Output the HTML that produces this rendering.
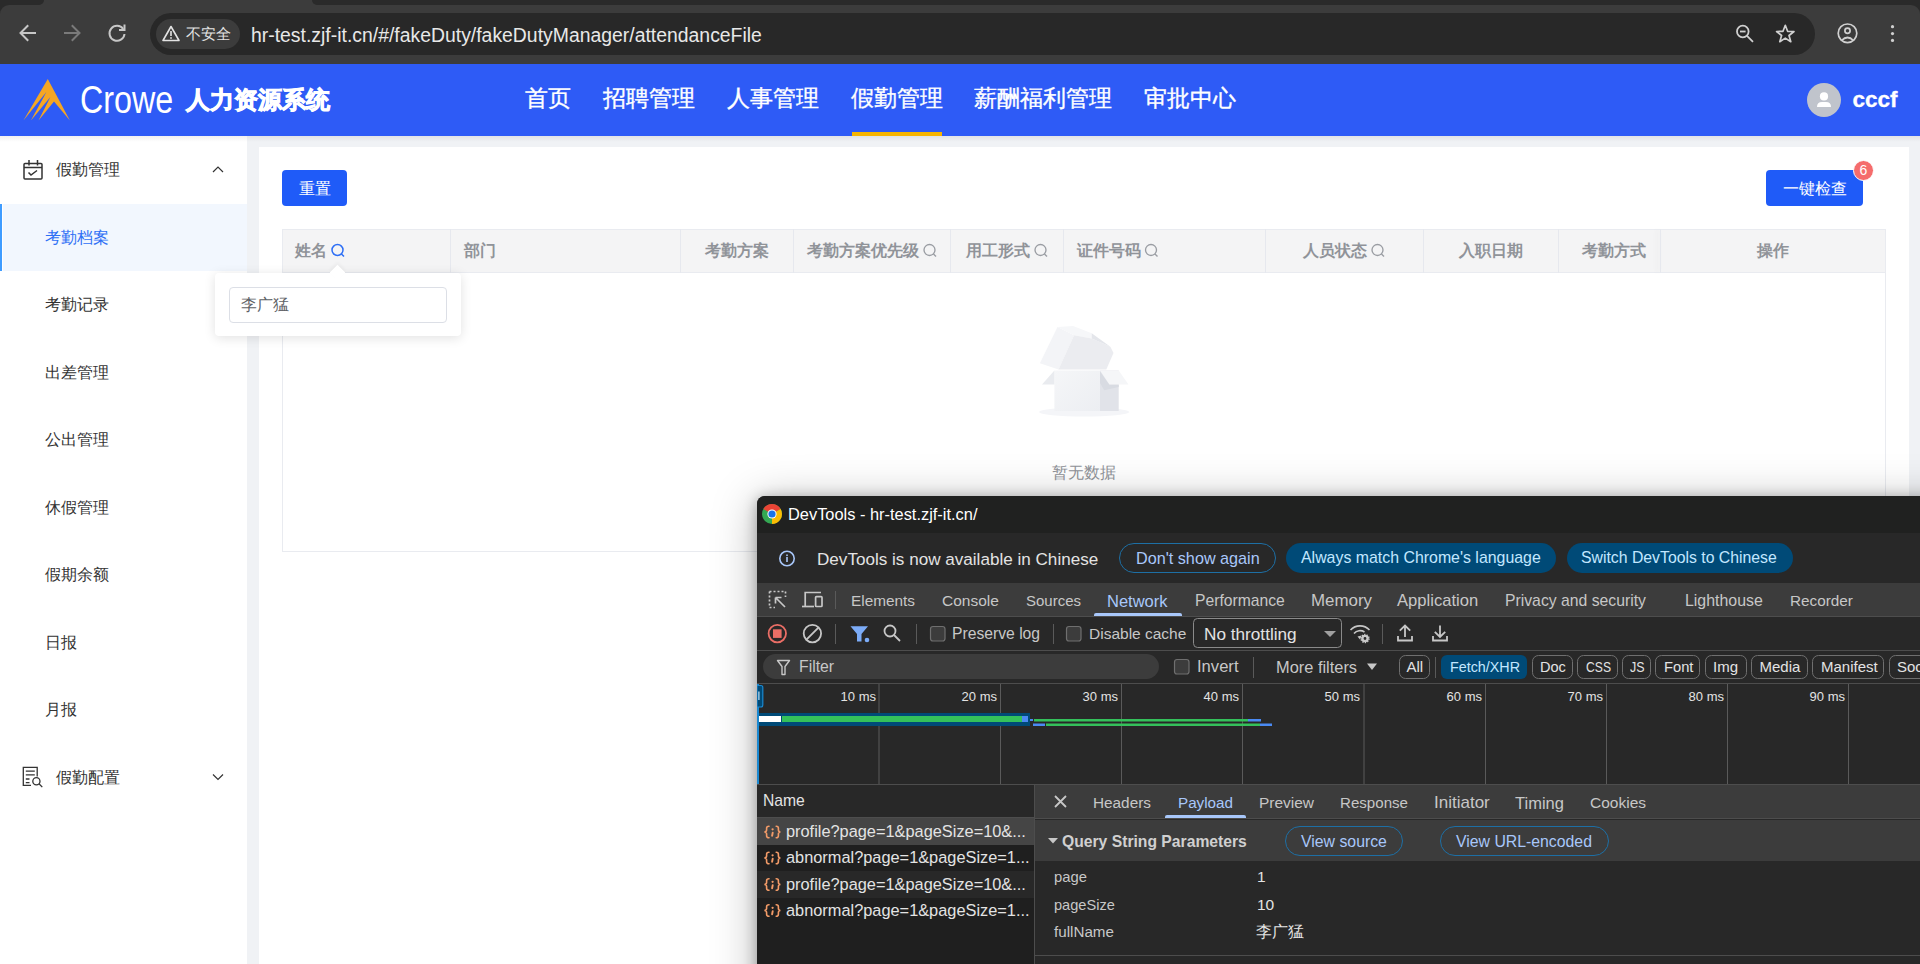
<!DOCTYPE html>
<html><head><meta charset="utf-8">
<style>
*{box-sizing:border-box;margin:0;padding:0}
html,body{width:1920px;height:964px;overflow:hidden;background:#f0f2f5;font-family:"Liberation Sans",sans-serif}
.a{position:absolute}
.nw{white-space:nowrap}
/* browser chrome */
#chrome{left:0;top:0;width:1920px;height:64px;background:#3c3c3c}
/* header */
#hdr{left:0;top:64px;width:1920px;height:72px;background:#2e5bf6}
.nav{top:83.3px;font-size:22.75px;color:#fff;line-height:30px;-webkit-text-stroke:0.35px #fff}
/* sidebar */
#side{left:0;top:136px;width:247px;height:828px;background:#fff}
.mi{left:45px;font-size:16px;color:#333;line-height:20px;margin-top:0.8px}
/* card */
#card{left:259px;top:147px;width:1650px;height:830px;background:#fff}
.btn{background:#1f5bf8;border-radius:4px;color:#fff;font-size:16px;text-align:center;line-height:37.6px;height:36px}
.th{top:240.5px;font-size:16px;font-weight:bold;color:#909399;line-height:20px}
.sep{top:229px;width:1px;height:44px;background:#e6e8ee}
/* devtools */
.dtxt{color:#e3e3e3;font-size:15px;line-height:18px}
</style></head><body>

<!-- ============ BROWSER CHROME ============ -->
<div id="chrome" class="a"></div>
<div class="a" style="left:0;top:0;width:44px;height:5px;background:#2a2a2a;border-radius:0 0 6px 0"></div>
<div class="a" style="left:312px;top:0;width:1608px;height:5px;background:#2a2a2a;border-radius:0 0 0 6px"></div>
<div class="a" style="left:0;top:5px;width:9px;height:9px;background:#2a2a2a"></div>
<div class="a" style="left:1911px;top:5px;width:9px;height:9px;background:#2a2a2a"></div>
<div class="a" style="left:0;top:5px;width:1920px;height:59px;background:#3c3c3c;border-radius:9px 9px 0 0"></div>
<div class="a" style="left:150px;top:13px;width:1665px;height:42px;background:#282828;border-radius:21px"></div>
<div class="a" style="left:156px;top:19px;width:84px;height:30px;background:#3c3c3c;border-radius:15px"></div>
<svg class="a" style="left:0;top:0" width="1920" height="64">
 <g stroke="#c7c7c7" stroke-width="2" fill="none" stroke-linecap="square">
  <path d="M21 33 H35 M27.5 26 L20.5 33 L27.5 40"/>
 </g>
 <g stroke="#7a7a7a" stroke-width="2" fill="none" stroke-linecap="square">
  <path d="M65 33 H79 M72.5 26 L79.5 33 L72.5 40"/>
 </g>
 <g stroke="#c7c7c7" stroke-width="2" fill="none">
  <path d="M123.2 29 A7.5 7.5 0 1 0 124.5 34"/>
  <path d="M124.5 25.5 V30 H120" stroke-linecap="square"/>
 </g>
 <g stroke="#e3e3e3" stroke-width="1.6" fill="none" stroke-linejoin="round">
  <path d="M171 26.5 L179 40.5 H163 Z"/>
 </g>
 <rect x="170.2" y="31" width="1.6" height="5" fill="#e3e3e3"/>
 <rect x="170.2" y="37.2" width="1.6" height="1.6" fill="#e3e3e3"/>
 <!-- zoom -->
 <g stroke="#d0d0d0" stroke-width="1.8" fill="none">
  <circle cx="1742.8" cy="31.5" r="5.8"/>
  <path d="M1747 35.8 L1753 41.8"/>
  <path d="M1740 31.5 H1745.6"/>
 </g>
 <!-- star -->
 <path d="M1785.3 25.3 L1787.6 31.3 L1794 31.5 L1789 35.5 L1790.8 41.7 L1785.3 38.1 L1779.8 41.7 L1781.6 35.5 L1776.6 31.5 L1783 31.3 Z" stroke="#d0d0d0" stroke-width="1.7" fill="none" stroke-linejoin="round"/>
 <!-- profile -->
 <g stroke="#d0d0d0" stroke-width="1.7" fill="none">
  <circle cx="1847.5" cy="33.3" r="9.3"/>
  <circle cx="1847.5" cy="30.8" r="2.6"/>
  <path d="M1841.5 40.5 Q1847.5 34.5 1853.5 40.5"/>
 </g>
 <g fill="#d0d0d0">
  <circle cx="1892.5" cy="26.7" r="1.6"/><circle cx="1892.5" cy="33.6" r="1.6"/><circle cx="1892.5" cy="40.4" r="1.6"/>
 </g>
</svg>
<div class="a nw" style="left:186px;top:24px;font-size:15px;line-height:20px;color:#e3e3e3">不安全</div>
<div class="a nw" style="left:251px;top:23px;font-size:19.4px;line-height:24px;color:#e8e8e8">hr-test.zjf-it.cn/#/fakeDuty/fakeDutyManager/attendanceFile</div>

<!-- ============ HEADER ============ -->
<div id="hdr" class="a"></div>
<svg class="a" style="left:0;top:64px" width="80" height="72">
 <path fill="#f5a623" d="M47.8 14.9 L69.9 56.5 L54 37.4 L38.5 56.5 L50.4 33 L30.9 56.5 L46.4 28.1 L23.4 56.5 Z"/>
</svg>
<div class="a nw" style="left:80px;top:80px;font-size:38px;line-height:40px;color:#fff;transform:scaleX(0.85);transform-origin:0 0;-webkit-text-stroke:1.2px #2e5bf6;paint-order:stroke fill">Crowe</div>
<div class="a nw" style="left:185.5px;top:84.8px;font-size:24.2px;line-height:30px;color:#fff;font-weight:900;-webkit-text-stroke:0.9px #fff">人力资源系统</div>
<div class="a nw nav" style="left:525px">首页</div>
<div class="a nw nav" style="left:603px">招聘管理</div>
<div class="a nw nav" style="left:727px">人事管理</div>
<div class="a nw nav" style="left:851px">假勤管理</div>
<div class="a nw nav" style="left:974px">薪酬福利管理</div>
<div class="a nw nav" style="left:1144px">审批中心</div>
<div class="a" style="left:852px;top:132px;width:90px;height:4px;background:#f7b500"></div>
<div class="a" style="left:1807px;top:83px;width:34px;height:34px;border-radius:50%;background:#c0c4cc"></div>
<svg class="a" style="left:1807px;top:83px" width="34" height="34">
 <circle cx="17" cy="13.4" r="4.1" fill="#fff"/>
 <path d="M10 24 Q10 19 15 19 H19 Q24 19 24 24 Z" fill="#fff"/>
</svg>
<div class="a nw" style="left:1852.5px;top:87px;font-size:22.5px;line-height:26px;color:#fff;font-weight:bold;-webkit-text-stroke:0.3px #fff">cccf</div>

<!-- ============ SIDEBAR ============ -->
<div id="side" class="a"></div>
<div class="a" style="left:0;top:136px;width:1920px;height:6px;background:linear-gradient(rgba(0,0,0,.06),rgba(0,0,0,0))"></div>
<svg class="a" style="left:0;top:136px" width="247" height="700">
 <g stroke="#333" stroke-width="1.5" fill="none">
  <rect x="24" y="27.5" width="18" height="15.5" rx="1"/>
  <path d="M24 31.5 H42"/>
  <path d="M29 24 V29.5 M37.5 24 V29.5"/>
  <path d="M28.5 36.5 L31 39 L37 34.5"/>
 </g>
 <path d="M213 36 L218 31 L223 36" stroke="#333" stroke-width="1.2" fill="none"/>
 <g stroke="#333" stroke-width="1.3" fill="none">
  <path d="M37.2 640.5 V631.4 H23.3 V649.3 H31"/>
  <path d="M25.8 635.2 H34.8 M25.8 638.8 H34.8 M25.8 643 H29.5 M25.8 646.6 H29.5"/>
  <circle cx="36.4" cy="645.2" r="3.6"/>
  <path d="M39 647.8 L42.3 651.1"/>
 </g>
 <path d="M213 638.5 L218 643.5 L223 638.5" stroke="#333" stroke-width="1.2" fill="none"/>
</svg>
<div class="a nw mi" style="left:56px;top:159px">假勤管理</div>
<div class="a" style="left:3px;top:204px;width:244px;height:67px;background:#f2f7fe"></div>
<div class="a" style="left:0;top:204px;width:2px;height:67px;background:#3f9cff"></div>
<div class="a nw mi" style="top:227px;color:#2e6ff5">考勤档案</div>
<div class="a nw mi" style="top:294px">考勤记录</div>
<div class="a nw mi" style="top:362px">出差管理</div>
<div class="a nw mi" style="top:429px">公出管理</div>
<div class="a nw mi" style="top:497px">休假管理</div>
<div class="a nw mi" style="top:564px">假期余额</div>
<div class="a nw mi" style="top:632px">日报</div>
<div class="a nw mi" style="top:699px">月报</div>
<div class="a nw mi" style="left:56px;top:767px">假勤配置</div>

<!-- ============ CARD ============ -->
<div id="card" class="a"></div>
<div class="a btn nw" style="left:282px;top:170px;width:65px">重置</div>
<div class="a btn nw" style="left:1766px;top:170px;width:97px">一键检查</div>
<div class="a nw" style="left:1853px;top:160px;width:21px;height:21px;border-radius:11px;background:#f56c6c;border:1px solid #fff;color:#fff;font-size:14px;line-height:19px;text-align:center">6</div>
<div class="a" style="left:282px;top:229px;width:1604px;height:44px;background:#f4f4f5;border:1px solid #e9ebf0"></div>
<div class="a" style="left:282px;top:272px;width:1604px;height:280px;border:1px solid #e9ebf0;border-top:none"></div>
<div class="a sep" style="left:450px"></div>
<div class="a sep" style="left:680px"></div>
<div class="a sep" style="left:793px"></div>
<div class="a sep" style="left:950px"></div>
<div class="a sep" style="left:1063px"></div>
<div class="a sep" style="left:1265px"></div>
<div class="a sep" style="left:1423px"></div>
<div class="a sep" style="left:1558px"></div>
<div class="a" style="left:1660px;top:229px;width:1px;height:44px;background:#e6e8ee;box-shadow:-3px 0 5px rgba(0,0,0,.08)"></div>
<div class="a nw th" style="left:295px">姓名</div>
<div class="a nw th" style="left:464px">部门</div>
<div class="a nw th" style="left:705px">考勤方案</div>
<div class="a nw th" style="left:807px">考勤方案优先级</div>
<div class="a nw th" style="left:966px">用工形式</div>
<div class="a nw th" style="left:1077px">证件号码</div>
<div class="a nw th" style="left:1303px">人员状态</div>
<div class="a nw th" style="left:1459px">入职日期</div>
<div class="a nw th" style="left:1582px">考勤方式</div>
<div class="a nw th" style="left:1757px">操作</div>
<svg class="a" style="left:282px;top:229px" width="1604" height="44">
 <g fill="none" stroke-width="1.5">
  <g stroke="#2e6ff5"><circle cx="55.5" cy="21" r="5.5"/><path d="M59.5 25 L62 27.5"/></g>
  <g stroke="#9a9da3" stroke-width="1.35"><circle cx="647.5" cy="21" r="5.5"/><path d="M651.5 25 L654 27.5"/>
  <circle cx="758.5" cy="21" r="5.5"/><path d="M762.5 25 L765 27.5"/>
  <circle cx="869" cy="21" r="5.5"/><path d="M873 25 L875.5 27.5"/>
  <circle cx="1095.5" cy="21" r="5.5"/><path d="M1099.5 25 L1102 27.5"/></g>
 </g>
</svg>
<!-- popover -->
<div class="a" style="left:215px;top:273px;width:246px;height:63px;background:#fff;border-radius:4px;box-shadow:0 2px 12px rgba(0,0,0,.12)"></div>
<div class="a" style="left:332px;top:267px;width:11px;height:11px;background:#fff;transform:rotate(45deg);box-shadow:-2px -2px 4px rgba(0,0,0,.04)"></div>
<div class="a" style="left:229px;top:287px;width:218px;height:36px;border:1px solid #dcdfe6;border-radius:4px;background:#fff"></div>
<div class="a nw" style="left:241px;top:295px;font-size:16px;line-height:20px;color:#606266">李广猛</div>
<!-- empty -->
<svg class="a" style="left:1036px;top:322px" width="100" height="98">
 <defs><linearGradient id="bf" x1="0" y1="0" x2="1" y2="1"><stop offset="0" stop-color="#f5f6f8"/><stop offset="1" stop-color="#eceef2"/></linearGradient></defs>
 <ellipse cx="48.1" cy="90" rx="45" ry="4.6" fill="#f4f5f8"/>
 <path d="M3.9 41.3 L21.5 5 L38.1 13.3 L22.5 47.5 Z" fill="#f3f4f7"/>
 <path d="M21.5 5 L37.1 3.9 L55.7 11.2 L55.7 16.4 L38.1 13.3 Z" fill="#f6f7f9"/>
 <path d="M22.5 47.5 L38.1 13.3 L55.7 16.4 L74.4 24.7 L77.5 30.9 L70.3 47.5 Z" fill="#ebecf0"/>
 <path d="M55.7 11.2 L74.4 24.7 L55.7 16.4 Z" fill="#e4e6eb"/>
 <path d="M18.4 48.5 H64 V89 H18.4 Z" fill="url(#bf)"/>
 <path d="M64 48.5 H82.7 V89 H64 Z" fill="#e1e3e9"/>
 <path d="M6 62.6 L18.4 48.5 V62.6 Z" fill="#e9ebef"/>
 <path d="M64 49.6 L73.4 62.6 H82.7 V65.1 L68.2 68.2 L64 61 Z" fill="#d8dbe2"/>
 <path d="M64 48.5 H82.7 L92.5 62.6 H73.4 Z" fill="#f5f6f8"/>
</svg>
<div class="a nw" style="left:1052px;top:462.8px;font-size:16px;line-height:20px;color:#909399">暂无数据</div>

<!-- ============ DEVTOOLS ============ -->
<div class="a" style="left:757px;top:496px;width:1300px;height:600px;border-radius:8px;background:#282828;box-shadow:0 2px 14px rgba(0,0,0,.3),-2px 4px 44px rgba(0,0,0,.26)"></div>
<!-- title bar -->
<div class="a" style="left:757px;top:496px;width:1163px;height:37px;background:#202120;border-radius:8px 0 0 0"></div>
<svg class="a" style="left:762px;top:504px" width="20" height="20" viewBox="0 0 20 20">
 <circle cx="10" cy="10" r="10" fill="#34a853"/>
 <path d="M10 10 L1.34 5 A10 10 0 0 1 18.66 5 Z" fill="#ea4335"/>
 <path d="M10 10 L18.66 5 A10 10 0 0 1 10 20 Z" fill="#fbbc04"/>
 <circle cx="10" cy="10" r="4.6" fill="#fff"/>
 <circle cx="10" cy="10" r="3.6" fill="#1a73e8"/>
</svg>
<div class="a nw" style="left:788px;top:504px;font-size:16.4px;line-height:20px;color:#fff">DevTools - hr-test.zjf-it.cn/</div>
<!-- info bar -->
<div class="a" style="left:757px;top:533px;width:1163px;height:50px;background:#282828"></div>
<svg class="a" style="left:777px;top:549px" width="20" height="20">
 <circle cx="10" cy="9.5" r="7.2" stroke="#a8c7fa" stroke-width="1.6" fill="none"/>
 <rect x="9.2" y="8" width="1.6" height="5" fill="#a8c7fa"/><rect x="9.2" y="5.5" width="1.6" height="1.6" fill="#a8c7fa"/>
</svg>
<div class="a nw dtxt" style="left:817px;top:549.5px;font-size:17.1px;line-height:20px">DevTools is now available in Chinese</div>
<div class="a" style="left:1119px;top:543px;width:157px;height:30px;border:1px solid #1d6fa5;border-radius:15px"></div>
<div class="a nw" style="left:1136px;top:548px;font-size:16.2px;line-height:20px;color:#a8c7fa">Don't show again</div>
<div class="a" style="left:1286px;top:543px;width:270px;height:30px;background:#004a77;border-radius:15px"></div>
<div class="a nw" style="left:1301px;top:548px;font-size:15.9px;line-height:20px;color:#c2e7ff">Always match Chrome's language</div>
<div class="a" style="left:1567px;top:543px;width:226px;height:30px;background:#004a77;border-radius:15px"></div>
<div class="a nw" style="left:1581px;top:548px;font-size:15.8px;line-height:20px;color:#c2e7ff">Switch DevTools to Chinese</div>
<!-- tab bar -->
<div class="a" style="left:757px;top:583px;width:1163px;height:34px;background:#3c3c3c;border-bottom:1px solid #4d4d4d"></div>
<svg class="a" style="left:757px;top:583px" width="100" height="34">
 <g stroke="#c7c7c7" stroke-width="1.7" fill="none">
  <path d="M12.5 8.5 H28.5 M12.5 8.5 V24.5 M28.5 8.5 V14 M12.5 24.5 H18" stroke-dasharray="2 2"/>
  <path d="M18.5 14.5 L28 24 M18.5 14.5 V20.5 M18.5 14.5 H24.5"/>
 </g>
 <g stroke="#c7c7c7" stroke-width="1.7" fill="none">
  <path d="M48.2 23.5 V9.5 H64"/>
  <path d="M45 23.5 H57"/>
  <rect x="58.6" y="13.6" width="6.4" height="9.9" rx="0.8"/>
 </g>
 <rect x="78" y="8" width="1" height="18" fill="#5a5a5a"/>
</svg>
<div class="a nw dtxt" style="left:851px;top:590.7px;font-size:15.35px;line-height:20px;color:#c7c7c7">Elements</div>
<div class="a nw dtxt" style="left:942px;top:590.7px;font-size:15.5px;line-height:20px;color:#c7c7c7">Console</div>
<div class="a nw dtxt" style="left:1026px;top:590.7px;font-size:15px;line-height:20px;color:#c7c7c7">Sources</div>
<div class="a nw dtxt" style="left:1107px;top:590.7px;font-size:16.5px;line-height:20px;color:#a8c7fa">Network</div>
<div class="a" style="left:1094px;top:613px;width:88px;height:3px;background:#a8c7fa;border-radius:2px 2px 0 0"></div>
<div class="a nw dtxt" style="left:1195px;top:590.7px;font-size:15.7px;line-height:20px;color:#c7c7c7">Performance</div>
<div class="a nw dtxt" style="left:1311px;top:590.7px;font-size:16.9px;line-height:20px;color:#c7c7c7">Memory</div>
<div class="a nw dtxt" style="left:1397px;top:590.7px;font-size:16.6px;line-height:20px;color:#c7c7c7">Application</div>
<div class="a nw dtxt" style="left:1505px;top:590.7px;font-size:15.76px;line-height:20px;color:#c7c7c7">Privacy and security</div>
<div class="a nw dtxt" style="left:1685px;top:590.7px;font-size:15.9px;line-height:20px;color:#c7c7c7">Lighthouse</div>
<div class="a nw dtxt" style="left:1790px;top:590.7px;font-size:15.3px;line-height:20px;color:#c7c7c7">Recorder</div>
<!-- toolbar -->
<div class="a" style="left:757px;top:617px;width:1163px;height:34px;background:#282828;border-bottom:1px solid #4d4d4d"></div>
<svg class="a" style="left:757px;top:617px" width="720" height="34">
 <circle cx="20.3" cy="16.6" r="8.7" stroke="#ea6e66" stroke-width="1.8" fill="none"/>
 <rect x="16" y="12.3" width="8.6" height="8.6" fill="#ea6e66"/>
 <circle cx="55.4" cy="16.6" r="8.7" stroke="#c7c7c7" stroke-width="1.8" fill="none"/>
 <path d="M49.4 22.6 L61.4 10.6" stroke="#c7c7c7" stroke-width="1.8"/>
 <rect x="78" y="7" width="1" height="20" fill="#5a5a5a"/>
 <path d="M93.5 9.3 H111 L104.5 17 V24.5 L100 24.5 V17 Z" fill="#7cacf8"/>
 <circle cx="110" cy="23" r="2.3" fill="#7cacf8"/>
 <g stroke="#c7c7c7" stroke-width="1.8" fill="none"><circle cx="133" cy="14" r="5.5"/><path d="M137 18 L143 24"/></g>
 <rect x="159" y="7" width="1" height="20" fill="#5a5a5a"/>
 <rect x="173.5" y="9.5" width="14.5" height="14.5" rx="2.5" fill="#3c3c3c" stroke="#6f6f6f" stroke-width="1.2"/>
 <rect x="296" y="7" width="1" height="20" fill="#5a5a5a"/>
 <rect x="309.5" y="9.5" width="14.5" height="14.5" rx="2.5" fill="#3c3c3c" stroke="#6f6f6f" stroke-width="1.2"/>
 <rect x="436.5" y="1.5" width="148" height="29" rx="4" fill="none" stroke="#8a8a8a" stroke-width="1"/>
 <path d="M567 14 H579 L573 20 Z" fill="#a0a0a0"/>
 <g stroke="#c7c7c7" stroke-width="1.6" fill="none">
  <path d="M593.5 13 A13 13 0 0 1 612.5 13"/>
  <path d="M597 16.5 A8 8 0 0 1 607.5 15"/>
 </g>
 <path d="M600.5 19.5 L603 22.5 L604.5 18.5 Z" fill="#c7c7c7"/>
 <circle cx="608" cy="21.5" r="2.6" fill="none" stroke="#c7c7c7" stroke-width="2.4"/>
 <circle cx="608" cy="21.5" r="4" fill="none" stroke="#c7c7c7" stroke-width="1.4" stroke-dasharray="1.3 1.2"/>
 <rect x="625" y="7" width="1" height="20" fill="#5a5a5a"/>
 <g stroke="#c7c7c7" stroke-width="1.8" fill="none">
  <path d="M648 8.5 V20 M642.8 13.7 L648 8.5 L653.2 13.7 M641 19 V23.5 H655 V19"/>
  <path d="M683 8.5 V20 M677.8 14.8 L683 20 L688.2 14.8 M676 19 V23.5 H690 V19"/>
 </g>
</svg>
<div class="a nw dtxt" style="left:952px;top:624px;font-size:15.7px;line-height:20px;color:#c7c7c7">Preserve log</div>
<div class="a nw dtxt" style="left:1089px;top:624px;font-size:15.5px;line-height:20px;color:#c7c7c7">Disable cache</div>
<div class="a nw dtxt" style="left:1204px;top:624px;font-size:17.2px;line-height:20px;color:#e3e3e3">No throttling</div>
<!-- filter row -->
<div class="a" style="left:757px;top:651px;width:1163px;height:33px;background:#282828;border-bottom:1px solid #4d4d4d"></div>
<div class="a" style="left:763px;top:654px;width:396px;height:25px;background:#3c3c3c;border-radius:13px"></div>
<svg class="a" style="left:757px;top:651px" width="1163" height="33">
 <path d="M20.5 9.5 H32.5 L28 15.5 V23.5 H25 V15.5 Z" fill="none" stroke="#c7c7c7" stroke-width="1.4" stroke-linejoin="round"/>
 <rect x="417.5" y="8.5" width="14.5" height="14.5" rx="2.5" fill="#3c3c3c" stroke="#6f6f6f" stroke-width="1.2"/>
 <rect x="496" y="6" width="1" height="21" fill="#5a5a5a"/>
 <path d="M610 12.5 H620 L615 19 Z" fill="#c7c7c7"/>
 <rect x="642.5" y="4.5" width="30" height="23" rx="6" fill="none" stroke="#6f6f6f" stroke-width="1"/>
 <rect x="678" y="6" width="1" height="21" fill="#5a5a5a"/>
 <rect x="684" y="4" width="86" height="24" rx="6" fill="#004a77"/>
 <rect x="775.5" y="4.5" width="40" height="23" rx="6" fill="none" stroke="#6f6f6f" stroke-width="1"/>
 <rect x="820.5" y="4.5" width="40" height="23" rx="6" fill="none" stroke="#6f6f6f" stroke-width="1"/>
 <rect x="865.5" y="4.5" width="28" height="23" rx="6" fill="none" stroke="#6f6f6f" stroke-width="1"/>
 <rect x="898.5" y="4.5" width="44" height="23" rx="6" fill="none" stroke="#6f6f6f" stroke-width="1"/>
 <rect x="948.5" y="4.5" width="41" height="23" rx="6" fill="none" stroke="#6f6f6f" stroke-width="1"/>
 <rect x="994.5" y="4.5" width="56" height="23" rx="6" fill="none" stroke="#6f6f6f" stroke-width="1"/>
 <rect x="1055.5" y="4.5" width="71" height="23" rx="6" fill="none" stroke="#6f6f6f" stroke-width="1"/>
 <rect x="1132.5" y="4.5" width="60" height="23" rx="6" fill="none" stroke="#6f6f6f" stroke-width="1"/>
</svg>
<div class="a nw dtxt" style="left:799px;top:657px;font-size:15.8px;line-height:20px;color:#c7c7c7">Filter</div>
<div class="a nw dtxt" style="left:1197px;top:657px;font-size:16.6px;line-height:20px;color:#c7c7c7">Invert</div>
<div class="a nw dtxt" style="left:1276px;top:657px;font-size:16.4px;line-height:20px;color:#c7c7c7">More filters</div>
<div class="a nw dtxt" style="left:1406.5px;top:657px;font-size:15px;line-height:20px">All</div>
<div class="a nw dtxt" style="left:1450px;top:657px;font-size:15px;line-height:20px;color:#c2e7ff;transform:scaleX(.955);transform-origin:0 0">Fetch/XHR</div>
<div class="a nw dtxt" style="left:1539.5px;top:657px;font-size:15px;line-height:20px;transform:scaleX(.97);transform-origin:0 0">Doc</div>
<div class="a nw dtxt" style="left:1585.5px;top:657px;font-size:15px;line-height:20px;transform:scaleX(.81);transform-origin:0 0">CSS</div>
<div class="a nw dtxt" style="left:1629.5px;top:657px;font-size:15px;line-height:20px;transform:scaleX(.83);transform-origin:0 0">JS</div>
<div class="a nw dtxt" style="left:1664px;top:657px;font-size:15px;line-height:20px;transform:scaleX(.98);transform-origin:0 0">Font</div>
<div class="a nw dtxt" style="left:1713px;top:657px;font-size:15px;line-height:20px">Img</div>
<div class="a nw dtxt" style="left:1759.5px;top:657px;font-size:15px;line-height:20px">Media</div>
<div class="a nw dtxt" style="left:1821px;top:657px;font-size:15px;line-height:20px">Manifest</div>
<div class="a nw dtxt" style="left:1897px;top:657px;font-size:15px;line-height:20px">Soc</div>

<!-- timeline -->
<div class="a" style="left:757px;top:684px;width:1163px;height:101px;background:#282828;border-bottom:1px solid #4d4d4d"></div>
<svg class="a" style="left:757px;top:684px" width="1163" height="101">
 <g fill="#5a5a5a">
  <rect x="121.5" y="0" width="1" height="100"/><rect x="243" y="0" width="1" height="100"/><rect x="364" y="0" width="1" height="100"/>
  <rect x="485" y="0" width="1" height="100"/><rect x="606.5" y="0" width="1" height="100"/><rect x="728" y="0" width="1" height="100"/>
  <rect x="849" y="0" width="1" height="100"/><rect x="970" y="0" width="1" height="100"/><rect x="1091" y="0" width="1" height="100"/>
 </g>
 <rect x="0" y="0" width="2" height="100" fill="#1a88d0"/>
 <path d="M0 1.5 H4 Q5.8 1.5 5.8 3.5 V21 Q5.8 23 4 23 H0 Z" fill="#004a77" stroke="#1a88d0" stroke-width="1.2"/>
 <rect x="1.3" y="7.5" width="1.2" height="8.5" fill="#c2e7ff"/>
 <rect x="2" y="29" width="271" height="13" fill="#004a77"/>
 <rect x="2" y="32" width="22" height="6" fill="#fff"/>
 <rect x="25" y="32" width="240" height="6" fill="#34c15b"/>
 <rect x="265" y="32" width="6" height="6" fill="#4a8af4"/>
 <rect x="273" y="35" width="3" height="2" fill="#4a8af4"/>
 <rect x="277" y="35" width="214" height="2.5" fill="#34c15b"/>
 <rect x="491" y="35" width="13" height="2.5" fill="#4a8af4"/>
 <rect x="276" y="39.5" width="12" height="2.5" fill="#4a8af4"/>
 <rect x="289" y="39.5" width="214" height="2.5" fill="#34c15b"/>
 <rect x="503" y="39.5" width="12" height="2.5" fill="#4a8af4"/>
</svg>
<div class="a nw" style="left:757px;top:689px;width:1163px;height:16px;font-size:13px;line-height:16px;color:#e3e3e3">
 <span class="a" style="right:1044px">10 ms</span><span class="a" style="right:923px">20 ms</span><span class="a" style="right:802px">30 ms</span>
 <span class="a" style="right:681px">40 ms</span><span class="a" style="right:560px">50 ms</span><span class="a" style="right:438px">60 ms</span>
 <span class="a" style="right:317px">70 ms</span><span class="a" style="right:196px">80 ms</span><span class="a" style="right:75px">90 ms</span>
</div>
<!-- name column -->
<div class="a" style="left:757px;top:785px;width:277px;height:179px;background:#1f1f1f"></div>
<div class="a" style="left:757px;top:785px;width:277px;height:33px;background:#282828;border-bottom:1px solid #4d4d4d"></div>
<div class="a nw dtxt" style="left:763px;top:791px;font-size:15.7px;line-height:20px">Name</div>
<div class="a" style="left:757px;top:818px;width:277px;height:27px;background:#454545"></div>
<div class="a" style="left:757px;top:871px;width:277px;height:27px;background:#282828"></div>
<div class="a nw dtxt" style="left:786px;top:821px;font-size:16.35px;line-height:20px">profile?page=1&amp;pageSize=10&amp;...</div>
<div class="a nw dtxt" style="left:786px;top:847px;font-size:16.35px;line-height:20px">abnormal?page=1&amp;pageSize=1...</div>
<div class="a nw dtxt" style="left:786px;top:874px;font-size:16.35px;line-height:20px">profile?page=1&amp;pageSize=10&amp;...</div>
<div class="a nw dtxt" style="left:786px;top:900px;font-size:16.35px;line-height:20px">abnormal?page=1&amp;pageSize=1...</div>
<svg class="a" style="left:757px;top:818px" width="30" height="110">
 <g transform="translate(0 0)" fill="none" stroke="#f29b68" stroke-width="1.6" stroke-linecap="round">
  <path d="M12 8.2 Q9.6 8.2 9.6 10.2 V12 Q9.6 13.8 7.4 14 Q9.6 14.2 9.6 16 V17.8 Q9.6 19.8 12 19.8"/>
  <path d="M19.2 8.2 Q21.4 8.2 21.4 10.2 V12 Q21.4 13.8 23.4 14 Q21.4 14.2 21.4 16 V17.8 Q21.4 19.8 19.2 19.8"/>
  <circle cx="15.6" cy="11.3" r="1.15" fill="#f29b68" stroke="none"/>
  <path d="M15.7 14.8 L15.1 17.8" stroke-width="1.9"/>
 </g>
 <g transform="translate(0 26)" fill="none" stroke="#f29b68" stroke-width="1.6" stroke-linecap="round">
  <path d="M12 8.2 Q9.6 8.2 9.6 10.2 V12 Q9.6 13.8 7.4 14 Q9.6 14.2 9.6 16 V17.8 Q9.6 19.8 12 19.8"/>
  <path d="M19.2 8.2 Q21.4 8.2 21.4 10.2 V12 Q21.4 13.8 23.4 14 Q21.4 14.2 21.4 16 V17.8 Q21.4 19.8 19.2 19.8"/>
  <circle cx="15.6" cy="11.3" r="1.15" fill="#f29b68" stroke="none"/>
  <path d="M15.7 14.8 L15.1 17.8" stroke-width="1.9"/>
 </g>
 <g transform="translate(0 52.5)" fill="none" stroke="#f29b68" stroke-width="1.6" stroke-linecap="round">
  <path d="M12 8.2 Q9.6 8.2 9.6 10.2 V12 Q9.6 13.8 7.4 14 Q9.6 14.2 9.6 16 V17.8 Q9.6 19.8 12 19.8"/>
  <path d="M19.2 8.2 Q21.4 8.2 21.4 10.2 V12 Q21.4 13.8 23.4 14 Q21.4 14.2 21.4 16 V17.8 Q21.4 19.8 19.2 19.8"/>
  <circle cx="15.6" cy="11.3" r="1.15" fill="#f29b68" stroke="none"/>
  <path d="M15.7 14.8 L15.1 17.8" stroke-width="1.9"/>
 </g>
 <g transform="translate(0 78.5)" fill="none" stroke="#f29b68" stroke-width="1.6" stroke-linecap="round">
  <path d="M12 8.2 Q9.6 8.2 9.6 10.2 V12 Q9.6 13.8 7.4 14 Q9.6 14.2 9.6 16 V17.8 Q9.6 19.8 12 19.8"/>
  <path d="M19.2 8.2 Q21.4 8.2 21.4 10.2 V12 Q21.4 13.8 23.4 14 Q21.4 14.2 21.4 16 V17.8 Q21.4 19.8 19.2 19.8"/>
  <circle cx="15.6" cy="11.3" r="1.15" fill="#f29b68" stroke="none"/>
  <path d="M15.7 14.8 L15.1 17.8" stroke-width="1.9"/>
 </g>
</svg>
<div class="a" style="left:1034px;top:785px;width:1px;height:179px;background:#4d4d4d"></div>
<!-- detail pane -->
<div class="a" style="left:1035px;top:785px;width:885px;height:179px;background:#282828"></div>
<div class="a" style="left:1035px;top:785px;width:885px;height:34px;background:#3c3c3c;border-bottom:1px solid #4d4d4d"></div>
<svg class="a" style="left:1035px;top:785px" width="60" height="34">
 <path d="M20 11 L31 22 M31 11 L20 22" stroke="#c7c7c7" stroke-width="1.8"/>
</svg>
<div class="a nw dtxt" style="left:1093px;top:792.7px;font-size:15.34px;line-height:20px;color:#c7c7c7">Headers</div>
<div class="a nw dtxt" style="left:1178px;top:792.7px;font-size:15.22px;line-height:20px;color:#a8c7fa">Payload</div>
<div class="a" style="left:1165px;top:815px;width:81px;height:3px;background:#a8c7fa;border-radius:2px 2px 0 0"></div>
<div class="a nw dtxt" style="left:1259px;top:792.7px;font-size:15.46px;line-height:20px;color:#c7c7c7">Preview</div>
<div class="a nw dtxt" style="left:1340px;top:792.7px;font-size:15.1px;line-height:20px;color:#c7c7c7">Response</div>
<div class="a nw dtxt" style="left:1434px;top:792.7px;font-size:17px;line-height:20px;color:#c7c7c7">Initiator</div>
<div class="a nw dtxt" style="left:1515px;top:792.7px;font-size:16.5px;line-height:20px;color:#c7c7c7">Timing</div>
<div class="a nw dtxt" style="left:1590px;top:792.7px;font-size:15.5px;line-height:20px;color:#c7c7c7">Cookies</div>
<div class="a" style="left:1035px;top:820px;width:885px;height:41px;background:#3c3c3c"></div>
<svg class="a" style="left:1035px;top:820px" width="30" height="41"><path d="M13 18 H23 L18 23.5 Z" fill="#c7c7c7"/></svg>
<div class="a nw dtxt" style="left:1062px;top:832px;font-size:15.7px;line-height:20px;font-weight:bold;color:#d0d0d0">Query String Parameters</div>
<div class="a" style="left:1285px;top:826px;width:118px;height:30px;border:1px solid #1d6fa5;border-radius:15px"></div>
<div class="a nw" style="left:1301px;top:832px;font-size:15.84px;line-height:20px;color:#a8c7fa">View source</div>
<div class="a" style="left:1440px;top:826px;width:169px;height:30px;border:1px solid #1d6fa5;border-radius:15px"></div>
<div class="a nw" style="left:1456px;top:832px;font-size:15.82px;line-height:20px;color:#a8c7fa">View URL-encoded</div>
<div class="a nw dtxt" style="left:1054px;top:867px;font-size:14.8px;line-height:20px;color:#c7c7c7">page</div>
<div class="a nw dtxt" style="left:1054px;top:895px;font-size:14.6px;line-height:20px;color:#c7c7c7">pageSize</div>
<div class="a nw dtxt" style="left:1054px;top:922px;font-size:15.2px;line-height:20px;color:#c7c7c7">fullName</div>
<div class="a nw dtxt" style="left:1257px;top:867px;font-size:15.5px;line-height:20px">1</div>
<div class="a nw dtxt" style="left:1257px;top:895px;font-size:15.5px;line-height:20px">10</div>
<div class="a nw dtxt" style="left:1256px;top:922px;font-size:15.5px;line-height:20px">李广猛</div>
<div class="a" style="left:1035px;top:955px;width:885px;height:1px;background:#4d4d4d"></div>

</body></html>
